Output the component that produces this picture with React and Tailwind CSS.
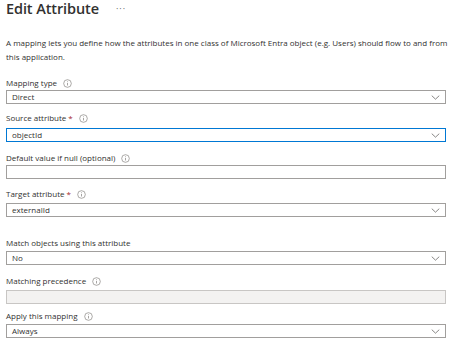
import React from "react";

const Info = () => (
  <svg width="9" height="9" viewBox="0 0 16 16" className="ml-[6px] inline-block" fill="none">
    <circle cx="8" cy="8" r="6.8" stroke="#7a7774" strokeWidth="1.1" />
    <line x1="8" y1="7" x2="8" y2="11.5" stroke="#7a7774" strokeWidth="1.2" />
    <circle cx="8" cy="4.8" r="0.8" fill="#7a7774" />
  </svg>
);

const Chevron = () => (
  <svg width="9" height="5" viewBox="0 0 10 6" fill="none" className="mr-[5px]">
    <path d="M0.5 0.8 L5 5 L9.5 0.8" stroke="#605e5c" strokeWidth="0.9" />
  </svg>
);

const Label = ({ children, req, info = true }) => (
  <div className="flex items-center h-[12px] text-[8px] text-[#323130] leading-[12px]">
    <span>{children}</span>
    {req && <span className="text-[#a4262c] ml-[2px]">*</span>}
    {info && <Info />}
  </div>
);

const Select = ({ value, focus }) => (
  <div
    className={`flex items-center justify-between h-[14px] px-[5px] pr-0 text-[8px] text-[#323130] bg-white border ${
      focus ? "border-[#0078d4]" : "border-[#a19f9d]"
    }`}
  >
    <span>{value}</span>
    <Chevron />
  </div>
);

export default function App() {
  return (
    <div
      className="w-[456px] h-[349px] bg-white overflow-hidden px-[6px]"
      style={{ fontFamily: '"Open Sans", "Noto Sans", sans-serif' }}
    >
      <div className="flex items-center h-[18px]">
        <h1 className="text-[14.5px] font-semibold text-[#323130] leading-[18px] tracking-[-0.1px]">
          Edit Attribute
        </h1>
        <span className="ml-[17px] text-[9px] text-[#605e5c] tracking-[1px] leading-[18px]">···</span>
      </div>
      <p className="mt-[18px] text-[8px] leading-[14px] text-[#323130]">
        A mapping lets you define how the attributes in one class of Microsoft Entra object (e.g. Users) should flow to and from
        <br />
        this application.
      </p>
      <div className="w-[440px]">
        <div className="mt-[13px]">
          <Label>Mapping type</Label>
          <div className="mt-[1px]"><Select value="Direct" /></div>
        </div>
        <div className="mt-[8px]">
          <Label req>Source attribute</Label>
          <div className="mt-[4px]"><Select value="objectId" focus /></div>
        </div>
        <div className="mt-[10px]">
          <Label>Default value if null (optional)</Label>
          <div className="mt-[1px] h-[14px] border border-[#a19f9d] bg-white" />
        </div>
        <div className="mt-[9px]">
          <Label req>Target attribute</Label>
          <div className="mt-[3px]"><Select value="externalId" /></div>
        </div>
        <div className="mt-[20px]">
          <Label info={false}>Match objects using this attribute</Label>
          <div className="mt-[2px]"><Select value="No" /></div>
        </div>
        <div className="mt-[10px]">
          <Label>Matching precedence</Label>
          <div className="mt-[3px] h-[14px] border border-[#c8c6c4] bg-[#f3f2f1]" />
        </div>
        <div className="mt-[6px]">
          <Label>Apply this mapping</Label>
          <div className="mt-[2px]"><Select value="Always" /></div>
        </div>
      </div>
    </div>
  );
}
